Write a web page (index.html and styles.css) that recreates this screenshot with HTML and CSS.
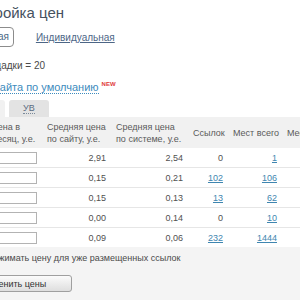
FILE: index.html
```html
<!DOCTYPE html>
<html lang="ru">
<head>
<meta charset="utf-8">
<title>Настройка цен</title>
<link rel="stylesheet" href="styles.css">
</head>
<body>
<div class="page">
  <h1 class="title">Настройка цен</h1>
  <div class="modes">
    <span class="mode">Групповая</span>
    <a class="mode-link" href="#">Индивидуальная</a>
  </div>
  <p class="info">Вес площадки = 20</p>
  <p class="defaults"><a class="dotted" href="#">Цены сайта по умолчанию</a><sup class="new">NEW</sup></p>
  <div class="tabs">
    <span class="tab tab-active">ВВ</span>
    <span class="tab"><span class="tab-label">УВ</span></span>
  </div>
  <table class="prices">
    <colgroup>
      <col class="c1"><col class="c2"><col class="c3"><col class="c4"><col class="c5"><col class="c6">
    </colgroup>
    <thead>
      <tr>
        <th class="first">Цена в<br>месяц, у.е.</th>
        <th>Средняя цена<br>по сайту, у.е.</th>
        <th>Средняя цена<br>по системе, у.е.</th>
        <th>Ссылок</th>
        <th>Мест всего</th>
        <th>Мест свободно</th>
      </tr>
    </thead>
    <tbody>
      <tr><td class="first"><input class="price" type="text"></td><td>2,91</td><td>2,54</td><td>0</td><td><a href="#">1</a></td><td>11</td></tr>
      <tr><td class="first"><input class="price" type="text"></td><td>0,15</td><td>0,21</td><td><a href="#">102</a></td><td><a href="#">106</a></td><td>14</td></tr>
      <tr><td class="first"><input class="price" type="text"></td><td>0,15</td><td>0,13</td><td><a href="#">13</a></td><td><a href="#">62</a></td><td class="warn">49</td></tr>
      <tr><td class="first"><input class="price" type="text"></td><td>0,00</td><td>0,14</td><td>0</td><td><a href="#">10</a></td><td>10</td></tr>
      <tr><td class="first"><input class="price" type="text"></td><td>0,09</td><td>0,06</td><td><a href="#">232</a></td><td><a href="#">1444</a></td><td>1212</td></tr>
    </tbody>
  </table>
  <div class="footer">
    <label class="check"><input type="checkbox" class="box"> Не прижимать цену для уже размещенных ссылок</label>
    <button class="apply" type="button">Применить цены</button>
  </div>
</div>
</body>
</html>
```

FILE: styles.css
```css
html, body {
  margin: 0;
  padding: 0;
  background: #ffffff;
  overflow: hidden;
}

body {
  font-family: "Liberation Sans", Arial, sans-serif;
  color: #555555;
  width: 300px;
  height: 300px;
}

.page {
  margin-left: -31px;
  width: 400px;
}

.title {
  margin: 0 0 0 -8px;
  height: 24px;
  font-size: 15px;
  line-height: 25px;
  font-weight: normal;
  color: #46525f;
}

.modes {
  display: flex;
  align-items: center;
  gap: 22px;
  margin: 3px 0 0 -17px;
  height: 20px;
}

.mode {
  box-sizing: border-box;
  height: 20px;
  line-height: 18px;
  padding: 0 4px 0 8px;
  border: 1px solid #8c8c8c;
  border-radius: 4px;
  font-size: 10px;
  color: #4d6a86;
}

.mode-link {
  font-size: 10px;
  color: #4d6686;
  text-decoration: underline;
}

.info {
  margin: 13px 0 0 -13px;
  font-size: 10px;
  line-height: 12px;
  color: #4a4a4a;
}

.defaults {
  margin: 9px 0 0 -6px;
  font-size: 11px;
  line-height: 12px;
}

.dotted {
  color: #3d8bbd;
  text-decoration: none;
  border-bottom: 1px dotted #3d8bbd;
}

.new {
  font-size: 6px;
  font-weight: bold;
  color: #e03a3a;
  margin-left: 3px;
  vertical-align: 5px;
  line-height: 0;
}

.tabs {
  display: flex;
  gap: 4px;
  margin: 7px 0 0 -4px;
  height: 17px;
}

.tab {
  box-sizing: border-box;
  height: 17px;
  padding: 0 14px;
  font-size: 9px;
  line-height: 17px;
  color: #5a6b80;
  background: #e3e3e3;
  border-radius: 3px 3px 0 0;
}

.tab-active {
  background: #f1f1f1;
}

.tab-label {
  border-bottom: 1px dotted #7a8a9a;
}

.prices {
  border-collapse: collapse;
  table-layout: fixed;
  width: 373px;
  font-size: 9px;
}

.c1 { width: 73px; }
.c2 { width: 69px; }
.c3 { width: 77px; }
.c4 { width: 40px; }
.c5 { width: 54px; }
.c6 { width: 60px; }

.prices th {
  background: #f1f1f1;
  height: 31px;
  padding: 0 5px;
  text-align: left;
  vertical-align: middle;
  font-weight: normal;
  line-height: 12px;
  color: #5a5a5a;
  white-space: nowrap;
}

.prices td {
  height: 19px;
  padding: 0 5px;
  text-align: right;
  vertical-align: middle;
  border-top: 1px solid #e6e6e6;
  color: #505050;
  white-space: nowrap;
}

.prices tbody tr:first-child td {
  border-top: none;
}

.prices .first {
  padding-left: 22px;
  text-align: left;
}

.prices a {
  color: #3f86b0;
  text-decoration: underline;
}

.prices .warn {
  color: #e0a020;
}

.price {
  display: block;
  box-sizing: border-box;
  width: 46px;
  height: 12px;
  padding: 0;
  border: 1px solid #b3b3b3;
  background: #ffffff;
}

.footer {
  background: #f4f4f4;
  padding: 5px 0 40px 0;
}

.check {
  display: block;
  margin-left: -15px;
  font-size: 9px;
  line-height: 12px;
  color: #4a4a4a;
}

.box {
  width: 11px;
  height: 11px;
  margin: 0 2px 0 0;
  vertical-align: -2px;
}

.apply {
  display: block;
  box-sizing: border-box;
  width: 122px;
  height: 17px;
  margin: 11px 0 0 -19px;
  padding: 0;
  font-family: "Liberation Sans", Arial, sans-serif;
  font-size: 9px;
  color: #333333;
  border: 1px solid #9f9f9f;
  border-radius: 3px;
  background: linear-gradient(#fbfbfb, #dedede);
}
```
